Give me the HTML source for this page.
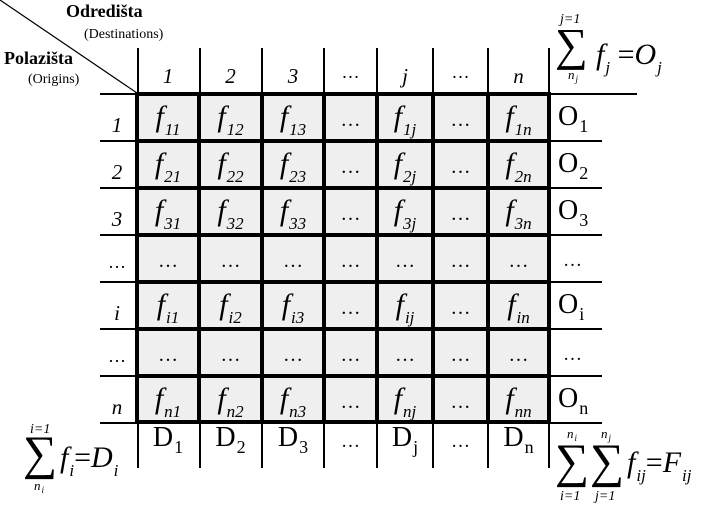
<!DOCTYPE html>
<html><head><meta charset="utf-8"><style>
body{margin:0;width:714px;height:513px;background:#fff;position:relative;overflow:hidden;font-family:"Liberation Serif",serif;}
.a{position:absolute}
.r{position:absolute;left:137px;height:47px;white-space:nowrap}
.r div{display:inline-block;vertical-align:top;height:47px;line-height:48px;text-align:center;font-style:italic;font-size:30px;}
.r div.d{font-style:normal;font-size:20px;line-height:54px}
.r div:nth-child(1){width:62px}.r div:nth-child(2){width:63px}.r div:nth-child(3){width:62px}.r div:nth-child(4){width:53px}.r div:nth-child(5){width:56px}.r div:nth-child(6){width:55px}.r div:nth-child(7){width:61px}
sub{font-size:17px;vertical-align:-9px;line-height:0;margin-left:1px;}
.hl{position:absolute;height:1.5px;background:#000}
.vl{position:absolute;width:1.5px;background:#000}
.tv{position:absolute;width:4px;top:92px;height:332px;background:#000}
.th{position:absolute;height:4px;left:136px;width:415px;background:#000}
.lab{position:absolute;text-align:center;font-size:21px;font-style:italic}
.o{position:absolute;left:558px;font-size:28px}
.o sub{font-size:18px;font-style:normal;vertical-align:-7px}
.dd{position:absolute;top:422px;font-size:28px;text-align:center}
.dd sub{font-size:18px;vertical-align:-7px}
.it{font-style:italic}
</style></head><body>
<svg class="a" style="left:0;top:0" width="140" height="96"><line x1="0" y1="0" x2="137" y2="93" stroke="#000" stroke-width="1.2"/></svg>
<div class="a" style="left:66px;top:1px;font-size:18px;font-weight:bold">Odredišta</div>
<div class="a" style="left:84px;top:27px;font-size:14px">(Destinations)</div>
<div class="a" style="left:4px;top:48px;font-size:18px;font-weight:bold">Polazišta</div>
<div class="a" style="left:28px;top:72px;font-size:14px">(Origins)</div>

<div class="a" style="left:137px;top:93px;width:412px;height:329px;background:#efefef"></div>

<div class="vl" style="left:137px;top:48px;height:45px"></div>
<div class="vl" style="left:199px;top:48px;height:45px"></div>
<div class="vl" style="left:261px;top:48px;height:45px"></div>
<div class="vl" style="left:323px;top:48px;height:45px"></div>
<div class="vl" style="left:376px;top:48px;height:45px"></div>
<div class="vl" style="left:432px;top:48px;height:45px"></div>
<div class="vl" style="left:487px;top:48px;height:45px"></div>
<div class="vl" style="left:548px;top:48px;height:45px"></div>
<div class="lab" style="left:137px;width:62px;top:64px">1</div>
<div class="lab" style="left:199px;width:63px;top:64px">2</div>
<div class="lab" style="left:262px;width:62px;top:64px">3</div>
<div class="lab" style="left:324px;width:53px;top:62px;font-style:normal;font-size:18px">…</div>
<div class="lab" style="left:377px;width:56px;top:64px">j</div>
<div class="lab" style="left:433px;width:55px;top:62px;font-style:normal;font-size:18px">…</div>
<div class="lab" style="left:488px;width:61px;top:64px">n</div>

<div class="hl" style="left:100px;top:93px;width:37px"></div>
<div class="hl" style="left:549px;top:93px;width:88px"></div>
<div class="hl" style="left:100px;top:140px;width:502px"></div>
<div class="hl" style="left:100px;top:187px;width:502px"></div>
<div class="hl" style="left:100px;top:234px;width:502px"></div>
<div class="hl" style="left:100px;top:281px;width:502px"></div>
<div class="hl" style="left:100px;top:328px;width:502px"></div>
<div class="hl" style="left:100px;top:375px;width:502px"></div>
<div class="hl" style="left:100px;top:422px;width:502px"></div>

<div class="th" style="top:92px"></div>
<div class="th" style="top:139px"></div>
<div class="th" style="top:186px"></div>
<div class="th" style="top:233px"></div>
<div class="th" style="top:280px"></div>
<div class="th" style="top:327px"></div>
<div class="th" style="top:374px"></div>
<div class="th" style="top:420px"></div>
<div class="tv" style="left:135px"></div>
<div class="tv" style="left:197px"></div>
<div class="tv" style="left:260px"></div>
<div class="tv" style="left:322px"></div>
<div class="tv" style="left:375px"></div>
<div class="tv" style="left:431px"></div>
<div class="tv" style="left:486px"></div>
<div class="tv" style="left:547px"></div>

<div class="r" style="top:93px"><div>f<sub>11</sub></div><div>f<sub>12</sub></div><div>f<sub>13</sub></div><div class="d">…</div><div>f<sub>1j</sub></div><div class="d">…</div><div>f<sub>1n</sub></div></div>
<div class="r" style="top:140px"><div>f<sub>21</sub></div><div>f<sub>22</sub></div><div>f<sub>23</sub></div><div class="d">…</div><div>f<sub>2j</sub></div><div class="d">…</div><div>f<sub>2n</sub></div></div>
<div class="r" style="top:187px"><div>f<sub>31</sub></div><div>f<sub>32</sub></div><div>f<sub>33</sub></div><div class="d">…</div><div>f<sub>3j</sub></div><div class="d">…</div><div>f<sub>3n</sub></div></div>
<div class="r" style="top:234px"><div class="d">…</div><div class="d">…</div><div class="d">…</div><div class="d">…</div><div class="d">…</div><div class="d">…</div><div class="d">…</div></div>
<div class="r" style="top:281px"><div>f<sub>i1</sub></div><div>f<sub>i2</sub></div><div>f<sub>i3</sub></div><div class="d">…</div><div>f<sub>ij</sub></div><div class="d">…</div><div>f<sub>in</sub></div></div>
<div class="r" style="top:328px"><div class="d">…</div><div class="d">…</div><div class="d">…</div><div class="d">…</div><div class="d">…</div><div class="d">…</div><div class="d">…</div></div>
<div class="r" style="top:375px"><div>f<sub>n1</sub></div><div>f<sub>n2</sub></div><div>f<sub>n3</sub></div><div class="d">…</div><div>f<sub>nj</sub></div><div class="d">…</div><div>f<sub>nn</sub></div></div>

<div class="lab" style="left:104px;width:26px;top:113px">1</div>
<div class="lab" style="left:104px;width:26px;top:160px">2</div>
<div class="lab" style="left:104px;width:26px;top:207px">3</div>
<div class="lab" style="left:104px;width:26px;top:252px;font-style:normal;font-size:18px">…</div>
<div class="lab" style="left:104px;width:26px;top:301px">i</div>
<div class="lab" style="left:104px;width:26px;top:346px;font-style:normal;font-size:18px">…</div>
<div class="lab" style="left:104px;width:26px;top:395px">n</div>

<div class="o" style="top:101px">O<sub>1</sub></div>
<div class="o" style="top:148px">O<sub>2</sub></div>
<div class="o" style="top:195px">O<sub>3</sub></div>
<div class="o" style="top:250px;left:563px;font-size:19px">…</div>
<div class="o" style="top:289px">O<sub>i</sub></div>
<div class="o" style="top:344px;left:563px;font-size:19px">…</div>
<div class="o" style="top:383px">O<sub>n</sub></div>

<div class="vl" style="left:137px;top:422px;height:46px"></div>
<div class="vl" style="left:199px;top:422px;height:46px"></div>
<div class="vl" style="left:261px;top:422px;height:46px"></div>
<div class="vl" style="left:323px;top:422px;height:46px"></div>
<div class="vl" style="left:376px;top:422px;height:46px"></div>
<div class="vl" style="left:432px;top:422px;height:46px"></div>
<div class="vl" style="left:487px;top:422px;height:46px"></div>
<div class="vl" style="left:548px;top:422px;height:46px"></div>
<div class="dd" style="left:137px;width:62px">D<sub>1</sub></div>
<div class="dd" style="left:199px;width:63px">D<sub>2</sub></div>
<div class="dd" style="left:262px;width:62px">D<sub>3</sub></div>
<div class="dd" style="left:324px;width:53px;font-size:19px;top:431px">…</div>
<div class="dd" style="left:377px;width:56px">D<sub>j</sub></div>
<div class="dd" style="left:433px;width:55px;font-size:19px;top:431px">…</div>
<div class="dd" style="left:488px;width:61px">D<sub>n</sub></div>

<div class="a it" style="left:560px;top:12px;font-size:14px">j=1</div>
<div class="a" style="left:555px;top:20px;font-size:46px;line-height:50px">∑</div>
<div class="a it" style="left:568px;top:67px;font-size:13px">n<sub style="font-size:9px;vertical-align:-3px">j</sub></div>
<div class="a it" style="left:596px;top:38px;font-size:30px">f<sub style="font-size:17px">j</sub><span style="font-style:normal"> =</span>O<sub style="font-size:17px">j</sub></div>

<div class="a it" style="left:30px;top:422px;font-size:14px">i=1</div>
<div class="a" style="left:23px;top:428px;font-size:48px;line-height:52px">∑</div>
<div class="a it" style="left:34px;top:478px;font-size:13px">n<sub style="font-size:9px;vertical-align:-3px">i</sub></div>
<div class="a it" style="left:60px;top:441px;font-size:30px">f<sub style="font-size:17px">i</sub><span style="font-style:normal">=</span>D<sub style="font-size:17px">i</sub></div>

<div class="a it" style="left:567px;top:426px;font-size:13px">n<sub style="font-size:9px;vertical-align:-3px">i</sub></div>
<div class="a it" style="left:601px;top:426px;font-size:13px">n<sub style="font-size:9px;vertical-align:-3px">j</sub></div>
<div class="a" style="left:555px;top:436px;font-size:48px;line-height:52px">∑</div>
<div class="a" style="left:590px;top:436px;font-size:48px;line-height:52px">∑</div>
<div class="a it" style="left:560px;top:489px;font-size:14px">i=1</div>
<div class="a it" style="left:595px;top:489px;font-size:14px">j=1</div>
<div class="a it" style="left:627px;top:446px;font-size:30px">f<sub style="font-size:17px">ij</sub><span style="font-style:normal">=</span>F<sub style="font-size:17px">ij</sub></div>
</body></html>
